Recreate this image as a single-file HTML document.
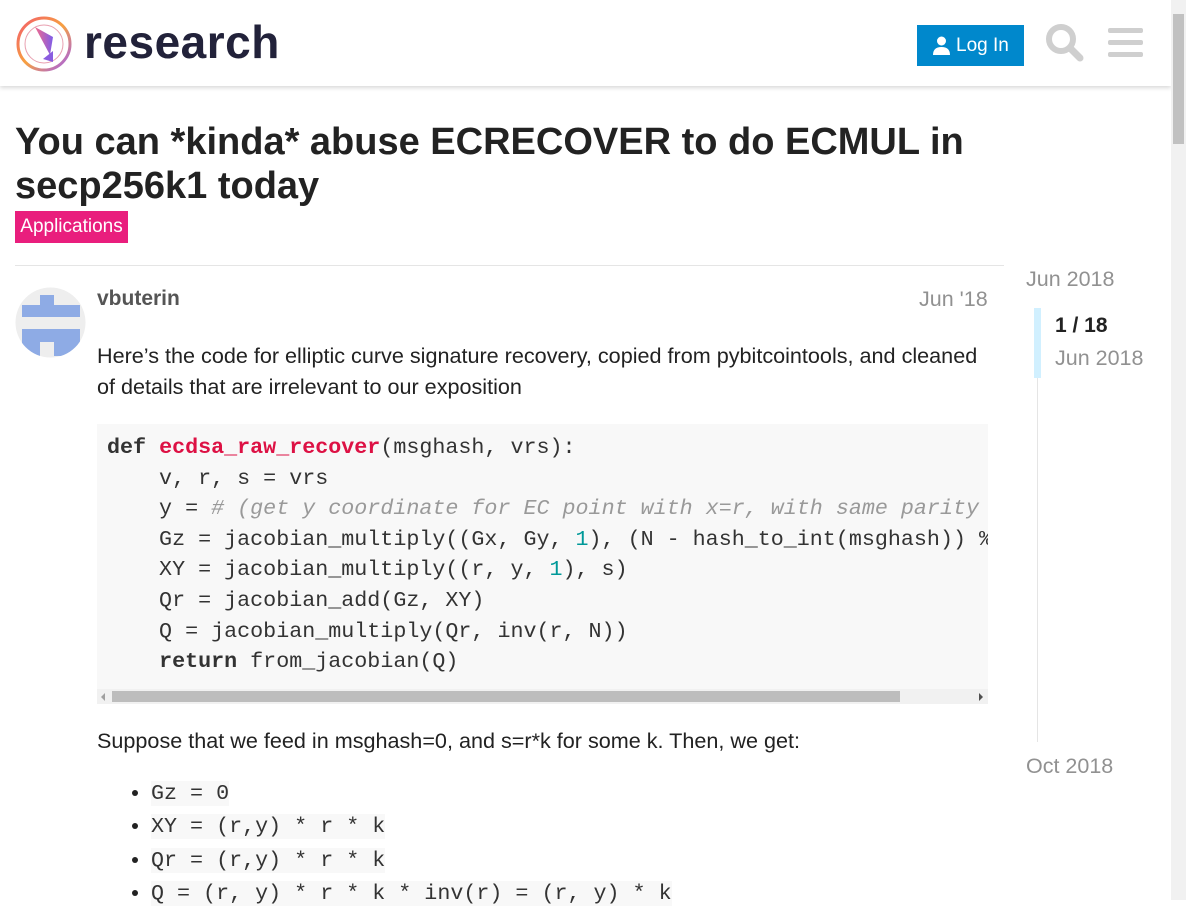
<!DOCTYPE html>
<html><head><meta charset="utf-8"><style>
body{margin:0;width:1186px;height:900px;overflow:hidden;background:#fff;font-family:"Liberation Sans",sans-serif;color:#222;position:relative}
.hdr{position:absolute;left:0;top:0;width:1171px;height:86px;background:#fff;box-shadow:0 2px 4px rgba(0,0,0,.15)}
.logo{position:absolute;left:84px;top:15px;font-size:46px;font-weight:bold;color:#22223a;letter-spacing:0.5px}
.btn{position:absolute;left:917px;top:25px;width:107px;height:41px;background:#0088cc;color:#fff;font-size:19px;line-height:41px}
.sb{position:absolute;left:1171px;top:0;width:15px;height:900px;background:#f1f1f1}
.sbt{position:absolute;left:1173px;top:14px;width:11px;height:130px;background:#c1c1c1}
h1{position:absolute;left:15px;top:120px;margin:0;font-size:38px;line-height:44px;font-weight:bold;color:#222;width:1000px}
.cat{position:absolute;left:15px;top:211px;height:32px;width:113px;background:#e91e7d;color:#fff;font-size:19px;line-height:31px;text-align:center}
.sep{position:absolute;left:15px;top:265px;width:989px;height:1px;background:#e5e5e5}
.txt{position:absolute;left:97px;font-size:21.6px;line-height:31px;color:#222;white-space:nowrap}
.code{position:absolute;left:97px;top:424px;width:891px;height:280px;background:#f8f8f8;overflow:hidden}
.code pre{margin:0;position:absolute;left:10px;top:9px;font-family:"Liberation Mono",monospace;font-size:21.7px;line-height:30.6px;color:#333;white-space:pre}
.k{font-weight:bold;color:#333}.f{color:#dd1144;font-weight:bold}.c{color:#999;font-style:italic}.n{color:#009999}
.ic{font-family:"Liberation Mono",monospace;font-size:21.7px;background:#f8f8f8;color:#333}
.tl{position:absolute;color:#919191;font-size:21.5px}
</style></head><body>
<div class="hdr">
<svg style="position:absolute;left:16px;top:15px" width="58" height="58" viewBox="0 0 58 58">
<defs><linearGradient id="g" x1="0" y1="0" x2="1" y2="1"><stop offset="0" stop-color="#f25c6c"/><stop offset=".5" stop-color="#f7a040"/><stop offset="1" stop-color="#a05cf0"/></linearGradient>
<linearGradient id="g2" x1="0" y1="0" x2="1" y2="0"><stop offset="0" stop-color="#f36b8c"/><stop offset="1" stop-color="#7f5ce8"/></linearGradient></defs>
<circle cx="28" cy="29" r="26" fill="none" stroke="url(#g)" stroke-width="3"/>
<circle cx="28" cy="29" r="19" fill="none" stroke="#e8a0b0" stroke-width="1"/>
<path d="M19 12 L37 22 L34 40 Z" fill="url(#g2)"/><path d="M27 44 L37 36 L37 47 Z" fill="#8a5ce0"/>
</svg>
<div class="logo">research</div>
<div class="btn"><svg style="position:absolute;left:16px;top:11px" width="17" height="19" viewBox="0 0 17 19"><circle cx="8.5" cy="5" r="4.5" fill="#fff"/><path d="M0 19 Q0 11 8.5 11 Q17 11 17 19Z" fill="#fff"/></svg><span style="position:absolute;left:39px">Log In</span></div>
<svg style="position:absolute;left:1045px;top:23px" width="40" height="40" viewBox="0 0 40 40"><circle cx="16" cy="16" r="12" fill="none" stroke="#cfcfcf" stroke-width="6"/><line x1="25" y1="25" x2="35" y2="35" stroke="#cfcfcf" stroke-width="7" stroke-linecap="round"/></svg>
<svg style="position:absolute;left:1108px;top:27px" width="36" height="32"><rect x="0" y="1" width="35" height="5" rx="2" fill="#cfcfcf"/><rect x="0" y="13" width="35" height="5" rx="2" fill="#cfcfcf"/><rect x="0" y="25" width="35" height="5" rx="2" fill="#cfcfcf"/></svg>
</div>
<div class="sb"></div><div class="sbt"></div>
<h1>You can *kinda* abuse ECRECOVER to do ECMUL in secp256k1 today</h1>
<div class="cat">Applications</div>
<div class="sep"></div>
<svg style="position:absolute;left:15px;top:287px" width="71" height="71" viewBox="0 0 71 71"><defs><clipPath id="cc"><circle cx="35.5" cy="35.5" r="35"/></clipPath></defs><circle cx="35.5" cy="35.5" r="35" fill="#eee"/><g clip-path="url(#cc)" fill="#8eabe5"><rect x="25" y="8" width="14" height="10"/><rect x="7" y="18" width="58" height="12"/><rect x="7" y="42" width="58" height="13"/><rect x="7" y="55" width="18" height="14"/><rect x="39" y="55" width="26" height="14"/></g></svg>
<div style="position:absolute;left:97px;top:287px;font-size:21px;font-weight:bold;color:#555">vbuterin</div>
<div style="position:absolute;left:919px;top:287px;font-size:21.5px;color:#919191">Jun '18</div>
<div class="txt" style="top:340px">Here’s the code for elliptic curve signature recovery, copied from pybitcointools, and cleaned<br>of details that are irrelevant to our exposition</div>
<div class="code"><pre><span class="k">def</span> <span class="f">ecdsa_raw_recover</span>(msghash, vrs):
    v, r, s = vrs
    y = <span class="c"># (get y coordinate for EC point with x=r, with same parity as v)</span>
    Gz = jacobian_multiply((Gx, Gy, <span class="n">1</span>), (N - hash_to_int(msghash)) % N)
    XY = jacobian_multiply((r, y, <span class="n">1</span>), s)
    Qr = jacobian_add(Gz, XY)
    Q = jacobian_multiply(Qr, inv(r, N))
    <span class="k">return</span> from_jacobian(Q)</pre>
<div style="position:absolute;left:0;top:265px;width:891px;height:15px;background:#f1f1f1"></div>
<div style="position:absolute;left:15px;top:267px;width:788px;height:11px;background:#bdbdbd"></div>
<div style="position:absolute;left:4px;top:269px;border-right:4px solid #a0a0a0;border-top:4px solid transparent;border-bottom:4px solid transparent"></div>
<div style="position:absolute;left:882px;top:269px;border-left:4px solid #505050;border-top:4px solid transparent;border-bottom:4px solid transparent"></div>
</div>
<div class="txt" style="top:725px">Suppose that we feed in msghash=0, and s=r*k for some k. Then, we get:</div>
<ul style="position:absolute;left:97px;top:777px;margin:0;padding-left:54px;font-size:21px;line-height:32.4px">
<li><span class="ic">Gz = 0</span></li>
<li><span class="ic">XY = (r,y) * r * k</span></li>
<li><span class="ic">Qr = (r,y) * r * k</span></li>
<li><span class="ic">Q = (r, y) * r * k * inv(r) = (r, y) * k</span></li>
</ul>
<div class="tl" style="left:1026px;top:267px">Jun 2018</div>
<div style="position:absolute;left:1037px;top:308px;width:1px;height:434px;background:#e5e5e5"></div>
<div style="position:absolute;left:1034px;top:308px;width:7px;height:70px;background:#d1f0ff"></div>
<div style="position:absolute;left:1055px;top:314px;font-size:21px;font-weight:bold;color:#222">1 / 18</div>
<div class="tl" style="left:1055px;top:346px">Jun 2018</div>
<div class="tl" style="left:1026px;top:754px">Oct 2018</div>
</body></html>
